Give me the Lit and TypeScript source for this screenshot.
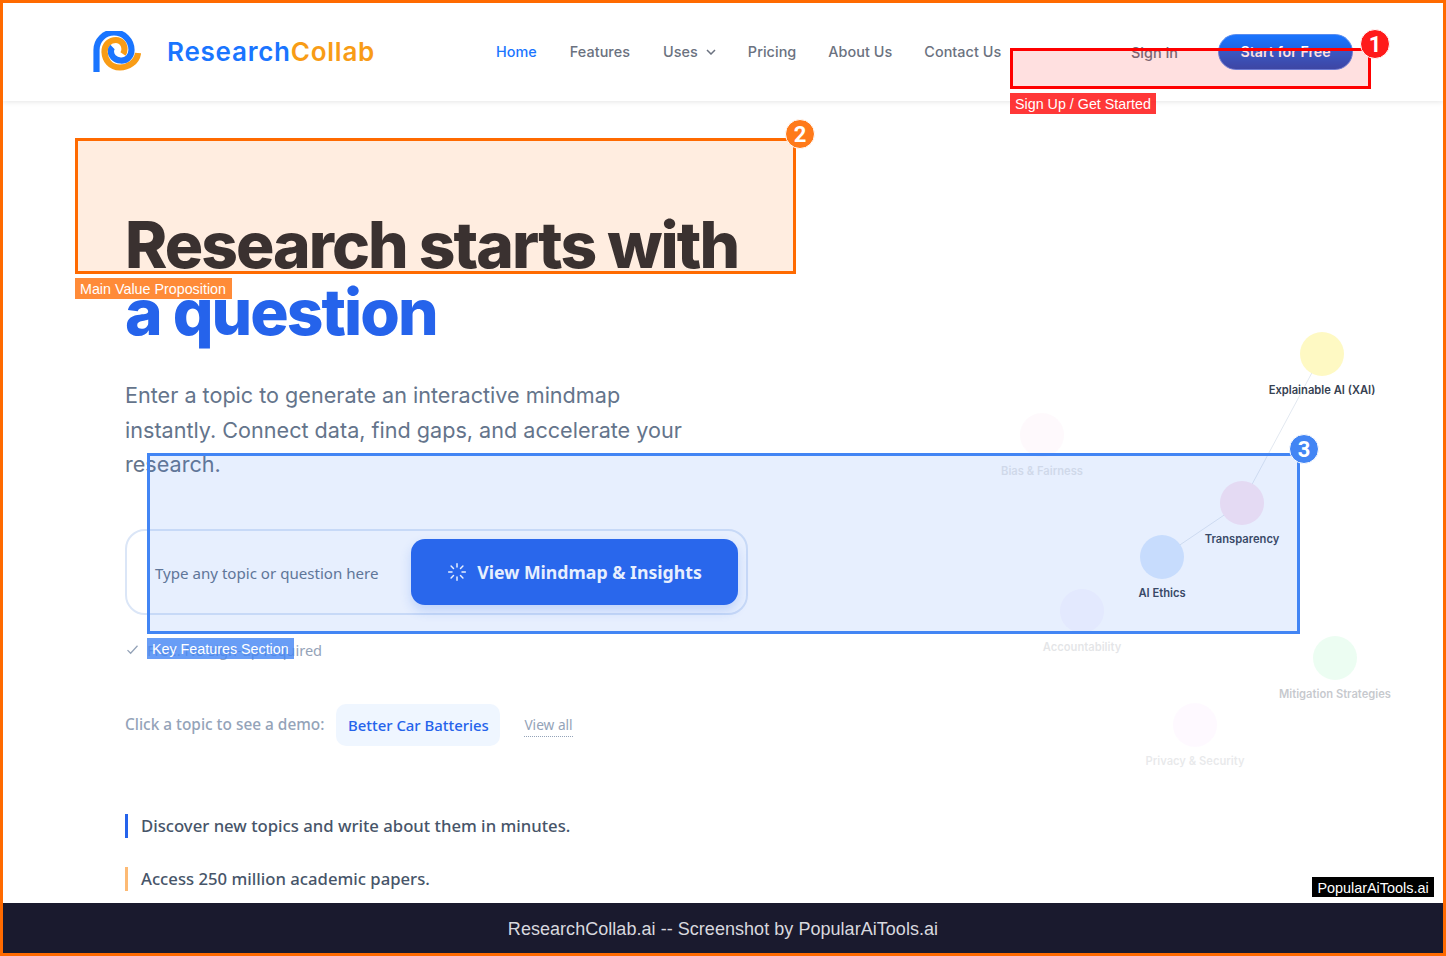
import { LitElement, html, css, svg } from "lit";
import { customElement } from "lit/decorators.js";

const NODES = [
  { x: 1319, y: 351, c: "#fef9c3", l: "Explainable AI (XAI)", o: 1, t: 1 },
  { x: 1239, y: 500, c: "#fce7f3", l: "Transparency", o: 1, t: 1 },
  { x: 1159, y: 554, c: "#dbeafe", l: "AI Ethics", o: 1, t: 1 },
  { x: 1039, y: 432, c: "#fce7f3", l: "Bias & Fairness", o: 0.25, t: 0.13 },
  { x: 1079, y: 608, c: "#f3e8ff", l: "Accountability", o: 0.3, t: 0.13 },
  { x: 1332, y: 655, c: "#dcfce7", l: "Mitigation Strategies", o: 0.55, t: 0.28 },
  { x: 1192, y: 722, c: "#fae8ff", l: "Privacy & Security", o: 0.25, t: 0.11 },
];

const NOTES = [
  { cls: "red", x: 1007, y: 45, w: 361, h: 41, lx: 1007, ly: 90, lw: 146, bx: 1372, by: 41, n: 1, t: "Sign Up / Get Started" },
  { cls: "org", x: 72, y: 135, w: 721, h: 136, lx: 72, ly: 275, lw: 157, bx: 797, by: 131, n: 2, t: "Main Value Proposition" },
  { cls: "blu", x: 144, y: 450, w: 1153, h: 181, lx: 144, ly: 635, lw: 147, bx: 1301, by: 446, n: 3, t: "Key Features Section" },
];

@customElement("app-root")
export class AppRoot extends LitElement {
  static styles = css`
    :host { display: block; font-family: "Inter", sans-serif; }
    * { box-sizing: border-box; }
    .frame { position: relative; width: 1446px; height: 956px; border: 3px solid #ff6a00; background: #fff; overflow: hidden; display: flex; flex-direction: column; }
    header { flex: none; height: 98px; display: flex; align-items: center; padding: 0 90px; background: #fff; box-shadow: 0 1px 5px rgba(0,0,0,.1); position: relative; z-index: 2; }
    .logo { width: 403px; display: flex; align-items: center; gap: 26px; flex: none; }
    .logo svg { display: block; flex: none; }
    .wordmark { font-size: 26px; font-weight: 600; color: #1a75ff; letter-spacing: 0.76px; padding-bottom: 2px; }
    .wordmark span { color: #f89c16; }
    nav { display: flex; align-items: center; gap: 32px; font-size: 14.4px; letter-spacing: 0.05px; font-weight: 500; color: #6b7280; padding-bottom: 1px; }
    nav .on { color: #1a75ff; margin-right: 1px; }
    .uses { display: flex; align-items: center; gap: 8px; margin-left: 1px; }
    .acts { margin-left: auto; display: flex; align-items: center; gap: 40px; font-size: 14.4px; font-weight: 500; color: #6b7280; }
    .cta { width: 135px; height: 36px; border-radius: 18px; border: 1px solid #5b8def; background: linear-gradient(#1a75ff, #2450bb); color: #fff; font-size: 14.2px; font-weight: 600; display: flex; align-items: center; justify-content: center; padding-bottom: 2px; }
    main { flex: 1; min-height: 0; padding: 0 0 0 122px; position: relative; overflow: hidden; }
    h1 { margin: 110px 0 0; font-size: 64px; line-height: 68px; font-weight: 800; letter-spacing: -1.95px; color: #1f2937; }
    h1 span { color: #2563eb; display: block; margin-top: -1px; }
    .lead { margin: 32px 0 0; width: 565px; font-size: 21.6px; line-height: 34.56px; color: #64748b; }
    .search { margin-top: 47px; width: 623px; height: 86px; border: 2px solid #dbe6f7; border-radius: 20px; display: flex; align-items: center; justify-content: space-between; padding: 0 8px 0 28px; }
    .ph { font-family: "Noto Sans", sans-serif; font-size: 15.1px; color: #64748b; padding-top: 2px; }
    .go { width: 327px; height: 66px; border-radius: 14px; background: #2563eb; color: #fff; font-family: "Noto Sans", sans-serif; font-size: 17.7px; font-weight: 700; display: flex; align-items: center; justify-content: center; gap: 10px; box-shadow: 0 6px 12px rgba(37,99,235,.2); }
    .note { margin-top: 26px; display: flex; align-items: center; gap: 7px; font-family: "Noto Sans", sans-serif; font-size: 14.6px; color: #94a3b8; height: 18px; }
    .demo { margin-top: 45px; display: flex; align-items: center; font-family: "Noto Sans", sans-serif; font-size: 15.4px; font-weight: 500; color: #94a3b8; height: 42px; }
    .chip { margin-left: 12px; height: 42px; width: 164px; flex: none; display: flex; align-items: center; justify-content: center; background: #eff6ff; border-radius: 10px; color: #2563eb; font-size: 14.9px; }
    .all { margin: 2px 0 0 24px; font-size: 13.7px; font-weight: 400; border-bottom: 1px dotted #94a3b8; padding-bottom: 2px; }
    ul { list-style: none; margin: 68px 0 0; padding: 0; display: flex; flex-direction: column; gap: 29px; font-family: "Noto Sans", sans-serif; font-size: 16.7px; font-weight: 500; color: #475569; }
    li { height: 24px; line-height: 24px; padding-left: 13px; border-left: 3px solid #2563eb; }
    li.o { border-left-color: #fdba74; }
    footer { flex: none; height: 50px; background: #1a1a2e; color: #d8d8de; font-family: "Liberation Sans", sans-serif; font-size: 18px; letter-spacing: 0.04px; display: flex; align-items: center; justify-content: center; padding-top: 2px; position: relative; z-index: 3; }
    .map { position: absolute; inset: 0; z-index: 1; pointer-events: none; }
    .map svg { position: absolute; left: 0; top: 0; }
    .node { position: absolute; width: 0; height: 0; }
    .dot { position: absolute; left: -22px; top: -22px; width: 44px; height: 44px; border-radius: 50%; }
    .lab { position: absolute; left: -100px; width: 200px; top: 29px; text-align: center; font-size: 11.2px; line-height: 14px; font-weight: 600; color: #374151; }
    .box { position: absolute; border: 3px solid; z-index: 5; }
    .box.red { border-color: #ff0000; background: rgba(255,0,0,.12); }
    .box.org { border-color: #ff6a00; background: rgba(255,106,0,.12); }
    .box.blu { border-color: #4285f4; background: rgba(66,133,244,.13); }
    .tag { position: absolute; z-index: 6; height: 21px; line-height: 22px; padding-left: 5px; color: #fff; font-family: "Liberation Sans", sans-serif; font-size: 14.3px; white-space: nowrap; overflow: hidden; }
    .tag.red { background: rgba(255,0,0,.78); }
    .tag.org { background: rgba(255,106,0,.78); }
    .tag.blu { background: rgba(66,133,244,.8); }
    .bdg { position: absolute; z-index: 7; width: 30px; height: 30px; margin: -15px 0 0 -15px; border-radius: 50%; border: 1px solid #fff; color: #fff; font-family: "Roboto", "Liberation Sans", sans-serif; font-weight: 700; font-size: 22px; display: flex; align-items: center; justify-content: center; }
    .bdg.red { background: #ff1a1a; }
    .bdg.org { background: #ff7a1a; }
    .bdg.blu { background: #4285f4; }
    .wm { position: absolute; z-index: 8; left: 1309px; top: 874px; width: 122px; height: 20px; background: #000; color: #fff; font-family: "Liberation Sans", sans-serif; font-size: 14.4px; line-height: 22px; text-align: center; }
  `;

  render() {
    return html`<div class="frame">
      <header>
        <div class="logo">
          <svg width="48" height="42" viewBox="93 31 48 42" fill="none" stroke-width="6.2">
            <path d="M138 53C137 62 128 67.500 120 67.500C110 67.500 105 60 104.500 52C104.500 44 110 40 116 40C121 40 124.500 44 124.500 49C124.500 51 124 52.500 123 54" stroke="#f89c16"/>
            <path d="M96.500 72V50A17.500 17.500 0 0 1 131.500 50C131.500 57 126 61 120.500 60.500C115 60 110.500 56 111 51C111 49.500 111.500 48 112.500 47" stroke="#1a75ff"/>
          </svg>
          <div class="wordmark">Research<span>Collab</span></div>
        </div>
        <nav>
          <span class="on">Home</span><span>Features</span>
          <span class="uses">Uses <svg width="10" height="6" viewBox="0 0 10 6" fill="none" stroke="#6b7280" stroke-width="1.500"><path d="M1 1l4 4 4-4"/></svg></span>
          <span>Pricing</span><span>About Us</span><span>Contact Us</span>
        </nav>
        <div class="acts"><span>Sign In</span><div class="cta">Start for Free</div></div>
      </header>
      <main>
        <h1>Research starts with<span>a question</span></h1>
        <p class="lead">Enter a topic to generate an interactive mindmap instantly. Connect data, find gaps, and accelerate your research.</p>
        <div class="search">
          <span class="ph">Type any topic or question here</span>
          <div class="go">
            <svg width="20" height="20" viewBox="0 0 24 24" fill="none" stroke="#fff" stroke-width="1.800" stroke-linecap="round"><path d="M12 2v4M12 18v4M4.900 4.900l2.900 2.900M16.200 16.200l2.900 2.900M2 12h4M18 12h4M4.900 19.100l2.900-2.900M16.200 7.800l2.900-2.900"/></svg>
            View Mindmap &amp; Insights
          </div>
        </div>
        <div class="note">
          <svg width="15" height="15" viewBox="0 0 24 24" fill="none" stroke="#94a3b8" stroke-width="2"><path d="M4 13l5 5L20 6"/></svg>
          <span>Free. No sign-up required</span>
        </div>
        <div class="demo">Click a topic to see a demo:<span class="chip">Better Car Batteries</span><span class="all">View all</span></div>
        <ul><li>Discover new topics and write about them in minutes.</li><li class="o">Access 250 million academic papers.</li></ul>
      </main>
      <footer>ResearchCollab.ai -- Screenshot by PopularAiTools.ai</footer>
      <div class="map">
        <svg width="1440" height="950" fill="none" stroke="#e2e8f0" stroke-width="1">
          ${svg`<path d="M1159 554L1239 500L1319 351"/>`}
        </svg>
        ${NODES.map((n) => html`<div class="node" style="left:${n.x}px;top:${n.y}px"><div class="dot" style="background:${n.c};opacity:${n.o}"></div><div class="lab" style="opacity:${n.t}">${n.l}</div></div>`)}
      </div>
      ${NOTES.map((n) => html`
        <div class="box ${n.cls}" style="left:${n.x}px;top:${n.y}px;width:${n.w}px;height:${n.h}px"></div>
        <div class="tag ${n.cls}" style="left:${n.lx}px;top:${n.ly}px;width:${n.lw}px">${n.t}</div>
        <div class="bdg ${n.cls}" style="left:${n.bx}px;top:${n.by}px">${n.n}</div>`)}
      <div class="wm">PopularAiTools.ai</div>
    </div>`;
  }
}
